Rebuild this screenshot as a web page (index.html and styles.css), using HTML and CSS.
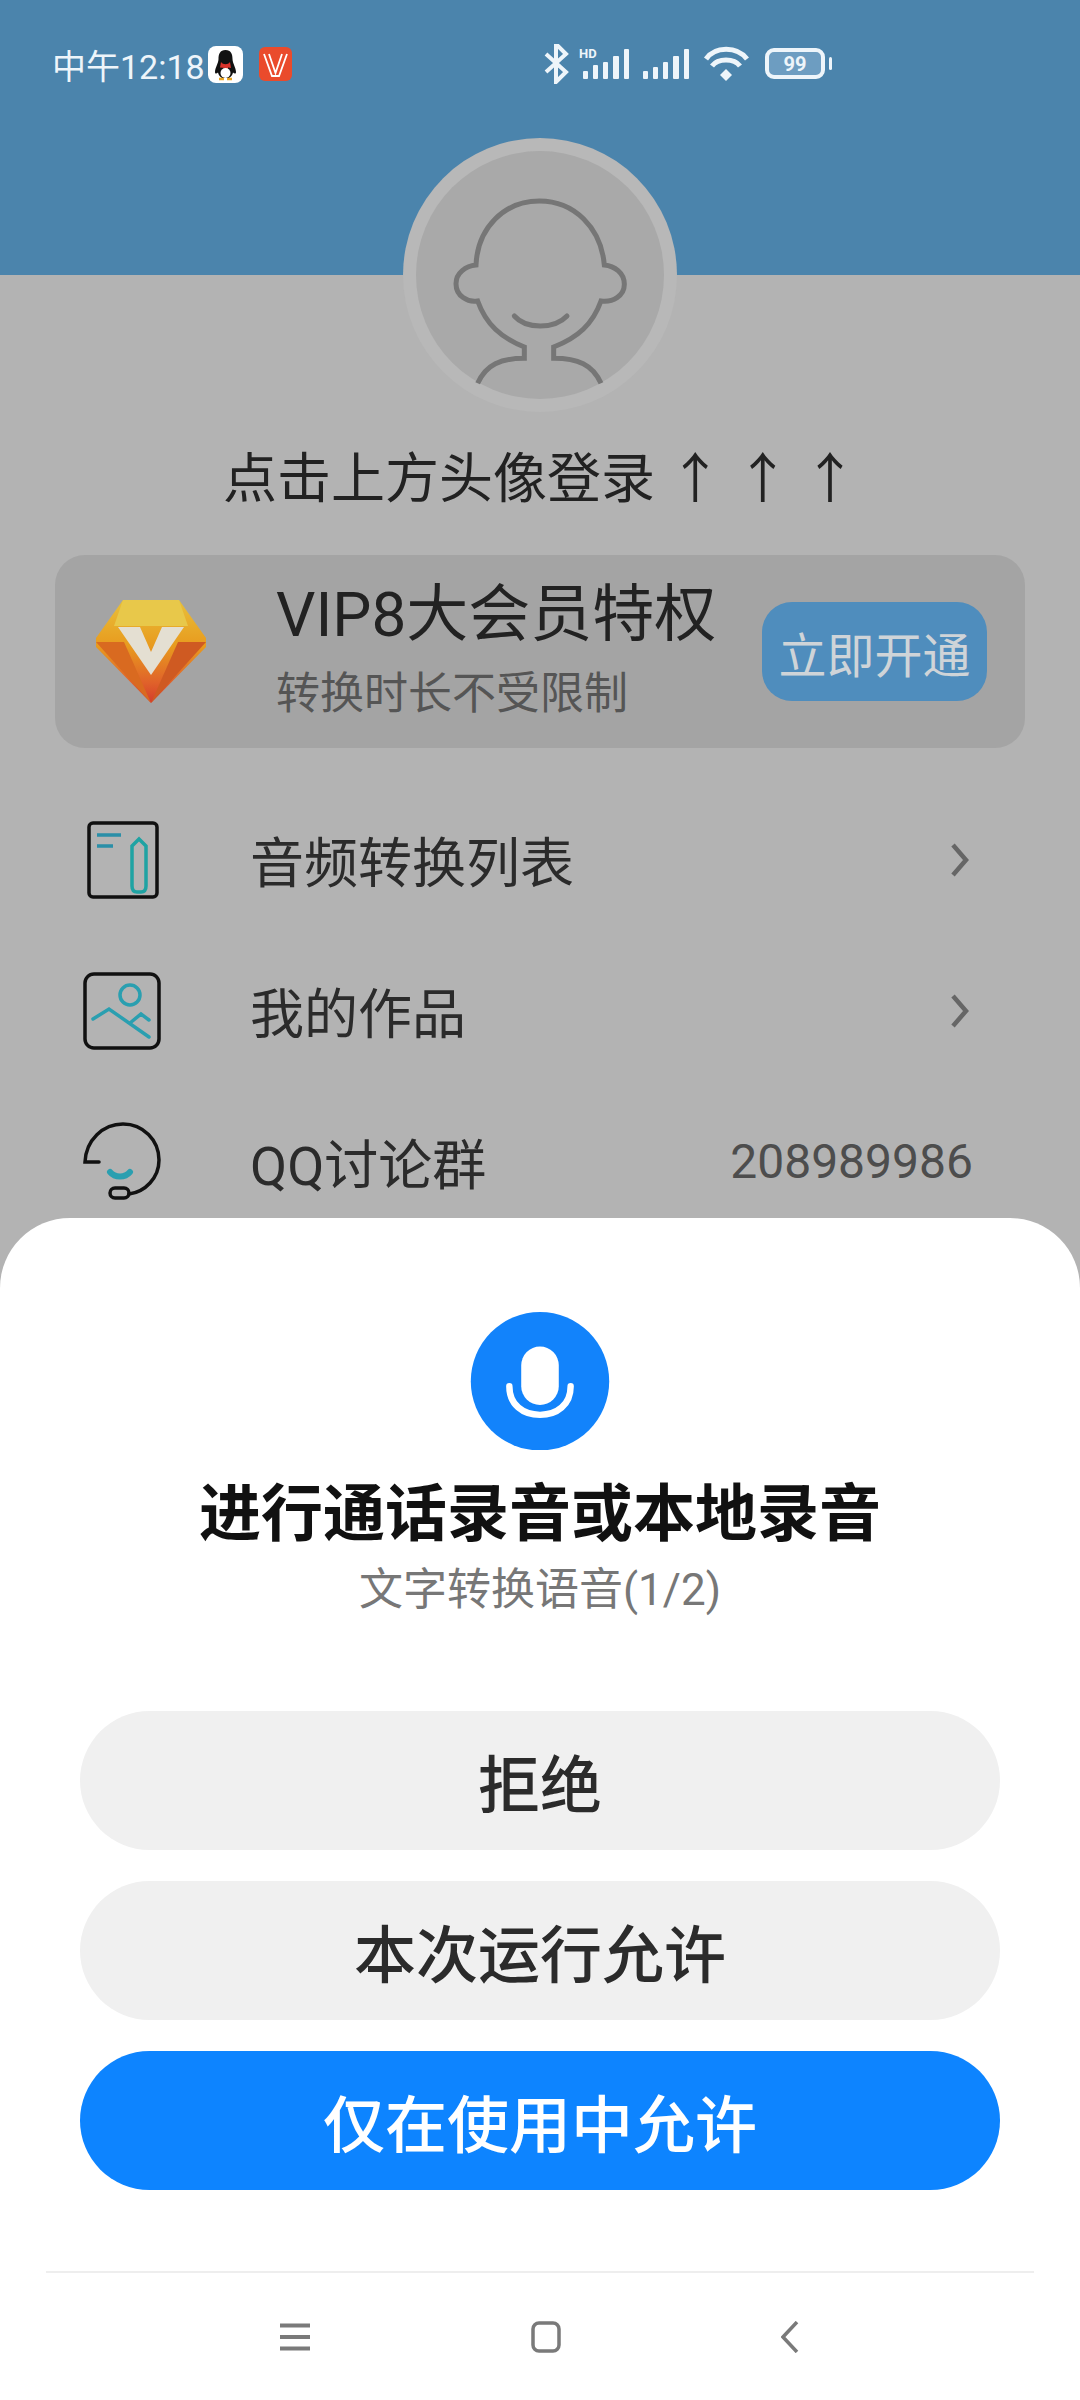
FILE: index.html
```html
<!DOCTYPE html>
<html lang="zh">
<head>
  <meta charset="UTF-8">
  <title>录音权限</title>
  <link rel="stylesheet" href="styles.css">
</head>
<body>

<div class="page">
  <div class="header">
    <div class="statusbar">
      <div class="status-left">
        <span class="clock">中午12:18</span>
        <svg class="qq-icon" width="35" height="37" viewBox="0 0 35 37">
          <rect width="35" height="37" rx="8" fill="#fff"/>
          <path d="M17.5 4C12 4 10.500 8 10.500 13C10.500 17 7 22 7 26C7 28 8.500 28 10 26.500C10.500 29 12 31 14 32L21 32C23 31 24.500 29 25 26.500C26.500 28 28 28 28 26C28 22 24.500 17 24.500 13C24.500 8 23 4 17.500 4Z" fill="#111"/>
          <path d="M13 16C15 19 20 19 22 16L23 22L20 21.500L20 25L17 22L12 21.500Z" fill="#d8322a"/>
          <ellipse cx="17.500" cy="27" rx="5" ry="5" fill="#fff"/>
          <path d="M11 33H16M19 33H24" stroke="#e9a520" stroke-width="2.500"/>
        </svg>
        <svg class="v-icon" width="33" height="34" viewBox="0 0 33 34">
          <rect width="33" height="34" rx="6" fill="#ea4b2c"/>
          <path d="M5 7L13 29H20L28 7M10 7L16.500 26L23 7" fill="none" stroke="#fff" stroke-width="1.800"/>
        </svg>
      </div>
      <div class="status-right">
        <svg width="290" height="40" viewBox="544 45 290 40">
          <path d="M547 55L567 73L557 83V45L567 55L547 73" fill="none" stroke="#eef5fa" stroke-width="4"/>
          <text class="hd" x="580" y="59">HD</text>
          <g fill="#eef5fa">
            <rect x="584" y="72" width="5" height="8" rx="1"/><rect x="594" y="66" width="5" height="14" rx="1"/><rect x="604" y="63" width="5" height="17" rx="1"/><rect x="614" y="57" width="6" height="23" rx="1"/><rect x="625" y="50" width="5" height="30" rx="1"/>
            <rect x="644" y="72" width="5" height="8" rx="1"/><rect x="654" y="68" width="5" height="12" rx="1"/><rect x="664" y="63" width="5" height="17" rx="1"/><rect x="674" y="57" width="6" height="23" rx="1"/><rect x="685" y="50" width="5" height="30" rx="1"/>
            <path d="M727 70L733 76L727 82L721 76Z"/>
          </g>
          <path d="M707 60C716 47 738 47 748 60M713 67C719 59 735 59 741 67" fill="none" stroke="#eef5fa" stroke-width="5"/>
          <rect x="768" y="51" width="56" height="27" rx="7" fill="#6d9dc1" stroke="#eef5fa" stroke-width="4"/>
          <rect x="830" y="58" width="3" height="13" rx="1.500" fill="#eef5fa"/>
          <text class="batt" x="796" y="72">99</text>
        </svg>
      </div>
    </div>
  </div>

  <div class="avatar">
    <svg width="248" height="248" viewBox="165 90 744 744">
      <circle cx="537" cy="462" r="372" fill="#a9a9a9"/>
      <path d="M350 787C375 730 420 712 490 712L490 678C420 650 375 610 350 540C320 545 285 525 285 488C285 455 315 435 345 432C350 320 430 240 535 240C640 240 720 320 730 432C760 435 790 455 790 490C790 525 755 545 720 540C695 610 650 650 578 678L578 712C650 712 695 730 720 787" fill="none" stroke="#767676" stroke-width="15"/>
      <path d="M460 585C495 625 580 625 618 585" fill="none" stroke="#767676" stroke-width="15" stroke-linecap="round"/>
    </svg>
  </div>

  <div class="login-tip">点击上方头像登录 ↑ ↑ ↑</div>

  <div class="vip-card">
    <svg class="vip-logo" width="110" height="103" viewBox="0 0 110 103">
      <defs>
        <linearGradient id="gem" x1="0" y1="0" x2="0" y2="1">
          <stop offset="0" stop-color="#e8c03a"/>
          <stop offset="0.45" stop-color="#e89a1e"/>
          <stop offset="0.8" stop-color="#e0622a"/>
          <stop offset="1" stop-color="#d43c2c"/>
        </linearGradient>
      </defs>
      <path d="M27 0H83L110 38V47L55 103L0 47V38Z" fill="url(#gem)"/>
      <path d="M0 42L55 103L28 42Z" fill="#d96a20"/>
      <path d="M110 42L55 103L82 42Z" fill="#cf5a22"/>
      <path d="M27 0H83L92 26H18Z" fill="#e8c84a"/>
      <path d="M22 27H44L55 52L66 27H88L55 75Z" fill="#e4dfd2"/>
    </svg>
    <div class="vip-text">
      <div class="vip-title">VIP8大会员特权</div>
      <div class="vip-sub">转换时长不受限制</div>
    </div>
    <div class="vip-btn">立即开通</div>
  </div>

  <div class="menu">
    <div class="menu-row">
      <svg class="menu-icon" width="78" height="80" viewBox="0 0 78 80">
        <rect x="6" y="3" width="68" height="74" rx="4" fill="none" stroke="#111" stroke-width="3.500"/>
        <path d="M14 15H38M14 26H30" stroke="#2a8fa8" stroke-width="3.500"/>
        <path d="M49 26L56 19L63 26V66C63 70 61 72 58 72H54C51 72 49 70 49 66Z" fill="none" stroke="#1fa3a3" stroke-width="3.500"/>
      </svg>
      <span class="menu-label">音频转换列表</span>
      <svg class="chevron" width="20" height="36" viewBox="0 0 20 36"><path d="M3 3L16 18L3 33" fill="none" stroke="#666" stroke-width="4.500"/></svg>
    </div>
    <div class="menu-row">
      <svg class="menu-icon" width="78" height="80" viewBox="0 0 78 80">
        <rect x="2" y="3" width="74" height="74" rx="9" fill="none" stroke="#111" stroke-width="3.500"/>
        <circle cx="47" cy="24" r="10" fill="none" stroke="#2a9fb0" stroke-width="3.500"/>
        <path d="M10 48L26 38L66 66M47 52L58 43L66 49" fill="none" stroke="#2a9fb0" stroke-width="3.500" stroke-linecap="round"/>
      </svg>
      <span class="menu-label">我的作品</span>
      <svg class="chevron" width="20" height="36" viewBox="0 0 20 36"><path d="M3 3L16 18L3 33" fill="none" stroke="#666" stroke-width="4.500"/></svg>
    </div>
    <div class="menu-row">
      <svg class="menu-icon" width="78" height="80" viewBox="0 0 78 80">
        <path d="M16 40H2C3 18 20 2 40 2C60 2 76 18 76 38C76 56 62 70 46 72" fill="none" stroke="#111" stroke-width="3.500" stroke-linecap="round"/>
        <rect x="27" y="66" width="19" height="10" rx="5" fill="none" stroke="#111" stroke-width="3.500"/>
        <path d="M27 50C32 56 42 56 47 50" fill="none" stroke="#2a9fb0" stroke-width="6" stroke-linecap="round"/>
      </svg>
      <span class="menu-label latin-wide">QQ讨论群</span>
      <span class="qq-number">208989986</span>
    </div>
  </div>
</div>

<div class="sheet">
  <svg class="mic" width="140" height="140" viewBox="0 0 140 140">
    <circle cx="70" cy="70" r="70" fill="#1283fb"/>
    <rect x="51" y="35" width="38" height="59" rx="19" fill="#fff"/>
    <path d="M39 75C39 94 53 104 70 104C87 104 101 94 101 75" fill="none" stroke="#fff" stroke-width="6.500" stroke-linecap="round"/>
  </svg>
  <div class="sheet-title">进行通话录音或本地录音</div>
  <div class="sheet-sub">文字转换语音(1/2)</div>
  <div class="sheet-actions">
    <div class="action">拒绝</div>
    <div class="action">本次运行允许</div>
    <div class="action primary">仅在使用中允许</div>
  </div>
  <div class="navbar">
    <svg width="32" height="28" viewBox="0 0 32 28"><path d="M1 2.500H31M1 14H31M1 25.500H31" stroke="#7a7a7a" stroke-width="4"/></svg>
    <svg width="30" height="32" viewBox="0 0 30 32"><rect x="2" y="2" width="26" height="28" rx="6" fill="none" stroke="#7a7a7a" stroke-width="3.500"/></svg>
    <svg width="18" height="32" viewBox="0 0 18 32"><path d="M16 1L2 16L16 31" fill="none" stroke="#7a7a7a" stroke-width="3.500"/></svg>
  </div>
</div>

</body>
</html>
```

FILE: styles.css
```css
* {
  box-sizing: border-box;
}

body {
  margin: 0;
  width: 1080px;
  height: 2400px;
  overflow: hidden;
  position: relative;
  background: #b3b3b3;
  font-family: Roboto, "Noto Sans CJK SC", sans-serif;
}

.page {
  display: flex;
  flex-direction: column;
  height: 2400px;
}

.header {
  height: 275px;
  background: #4b84ac;
}

.statusbar {
  display: flex;
  align-items: center;
  justify-content: space-between;
  height: 128px;
  padding: 0 247px 0 52px;
}

.status-left {
  display: flex;
  align-items: center;
}

.status-right {
  display: flex;
  align-items: center;
}

.status-right svg {
  display: block;
}

.clock {
  font-size: 34px;
  color: #eef5fa;
  width: 156px;
}

.v-icon {
  margin-left: 16px;
}

.hd {
  font: 700 13px Roboto, sans-serif;
  fill: #eef5fa;
}

.batt {
  font: 700 20px Roboto, sans-serif;
  fill: #eef5fa;
  text-anchor: middle;
}

.avatar {
  align-self: center;
  width: 274px;
  height: 274px;
  margin-top: -137px;
  border-radius: 50%;
  background: #b8b8b8;
  display: flex;
  align-items: center;
  justify-content: center;
  position: relative;
}

.login-tip {
  margin-top: 34px;
  text-align: center;
  font-size: 54px;
  line-height: 68px;
  color: #222;
}

.vip-card {
  display: flex;
  align-items: center;
  margin: 41px 55px 0;
  height: 193px;
  padding: 0 38px 0 41px;
  background: #a4a4a4;
  border-radius: 30px;
}

.vip-text {
  margin-left: 70px;
  flex: 1;
}

.vip-title {
  font-size: 62px;
  line-height: 78px;
  color: #222;
  margin-top: -6px;
}

.vip-sub {
  font-size: 44px;
  line-height: 56px;
  color: #555;
  margin-top: 12px;
}

.vip-btn {
  width: 225px;
  height: 99px;
  background: #4f8dbd;
  border-radius: 30px;
  color: #cfd4d8;
  font-size: 48px;
  display: flex;
  align-items: center;
  justify-content: center;
}

.menu {
  display: flex;
  flex-direction: column;
  margin-top: 36px;
}

.menu-row {
  display: flex;
  align-items: center;
  height: 151px;
  padding: 0 110px 0 83px;
}

.menu-label {
  margin-left: 89px;
  flex: 1;
  font-size: 54px;
  color: #2b2b2b;
}

.qq-number {
  font-size: 48px;
  color: #4d4d4d;
  margin-right: -3px;
}

.sheet {
  position: absolute;
  left: 0;
  right: 0;
  top: 1218px;
  bottom: 0;
  background: #fff;
  border-radius: 70px 70px 0 0;
  display: flex;
  flex-direction: column;
  align-items: center;
  padding-top: 94px;
}

.sheet-title {
  margin-top: 26px;
  font-size: 62px;
  line-height: 78px;
  font-weight: 700;
  color: #111;
}

.sheet-sub {
  margin-top: 8px;
  font-size: 44px;
  line-height: 56px;
  color: #777;
}

.sheet-actions {
  display: flex;
  flex-direction: column;
  gap: 31px;
  width: 920px;
  margin-top: 93px;
}

.action {
  height: 139px;
  border-radius: 70px;
  background: #f0f0f0;
  color: #2b2b2b;
  font-size: 62px;
  font-weight: 500;
  display: flex;
  align-items: center;
  justify-content: center;
}

.action.primary {
  background: #0d84ff;
  color: #fff;
}

.navbar {
  display: flex;
  align-items: center;
  justify-content: space-between;
  width: 988px;
  height: 130px;
  margin-top: 81px;
  padding: 0 235px 0 233px;
  border-top: 2px solid #eee;
}
```
